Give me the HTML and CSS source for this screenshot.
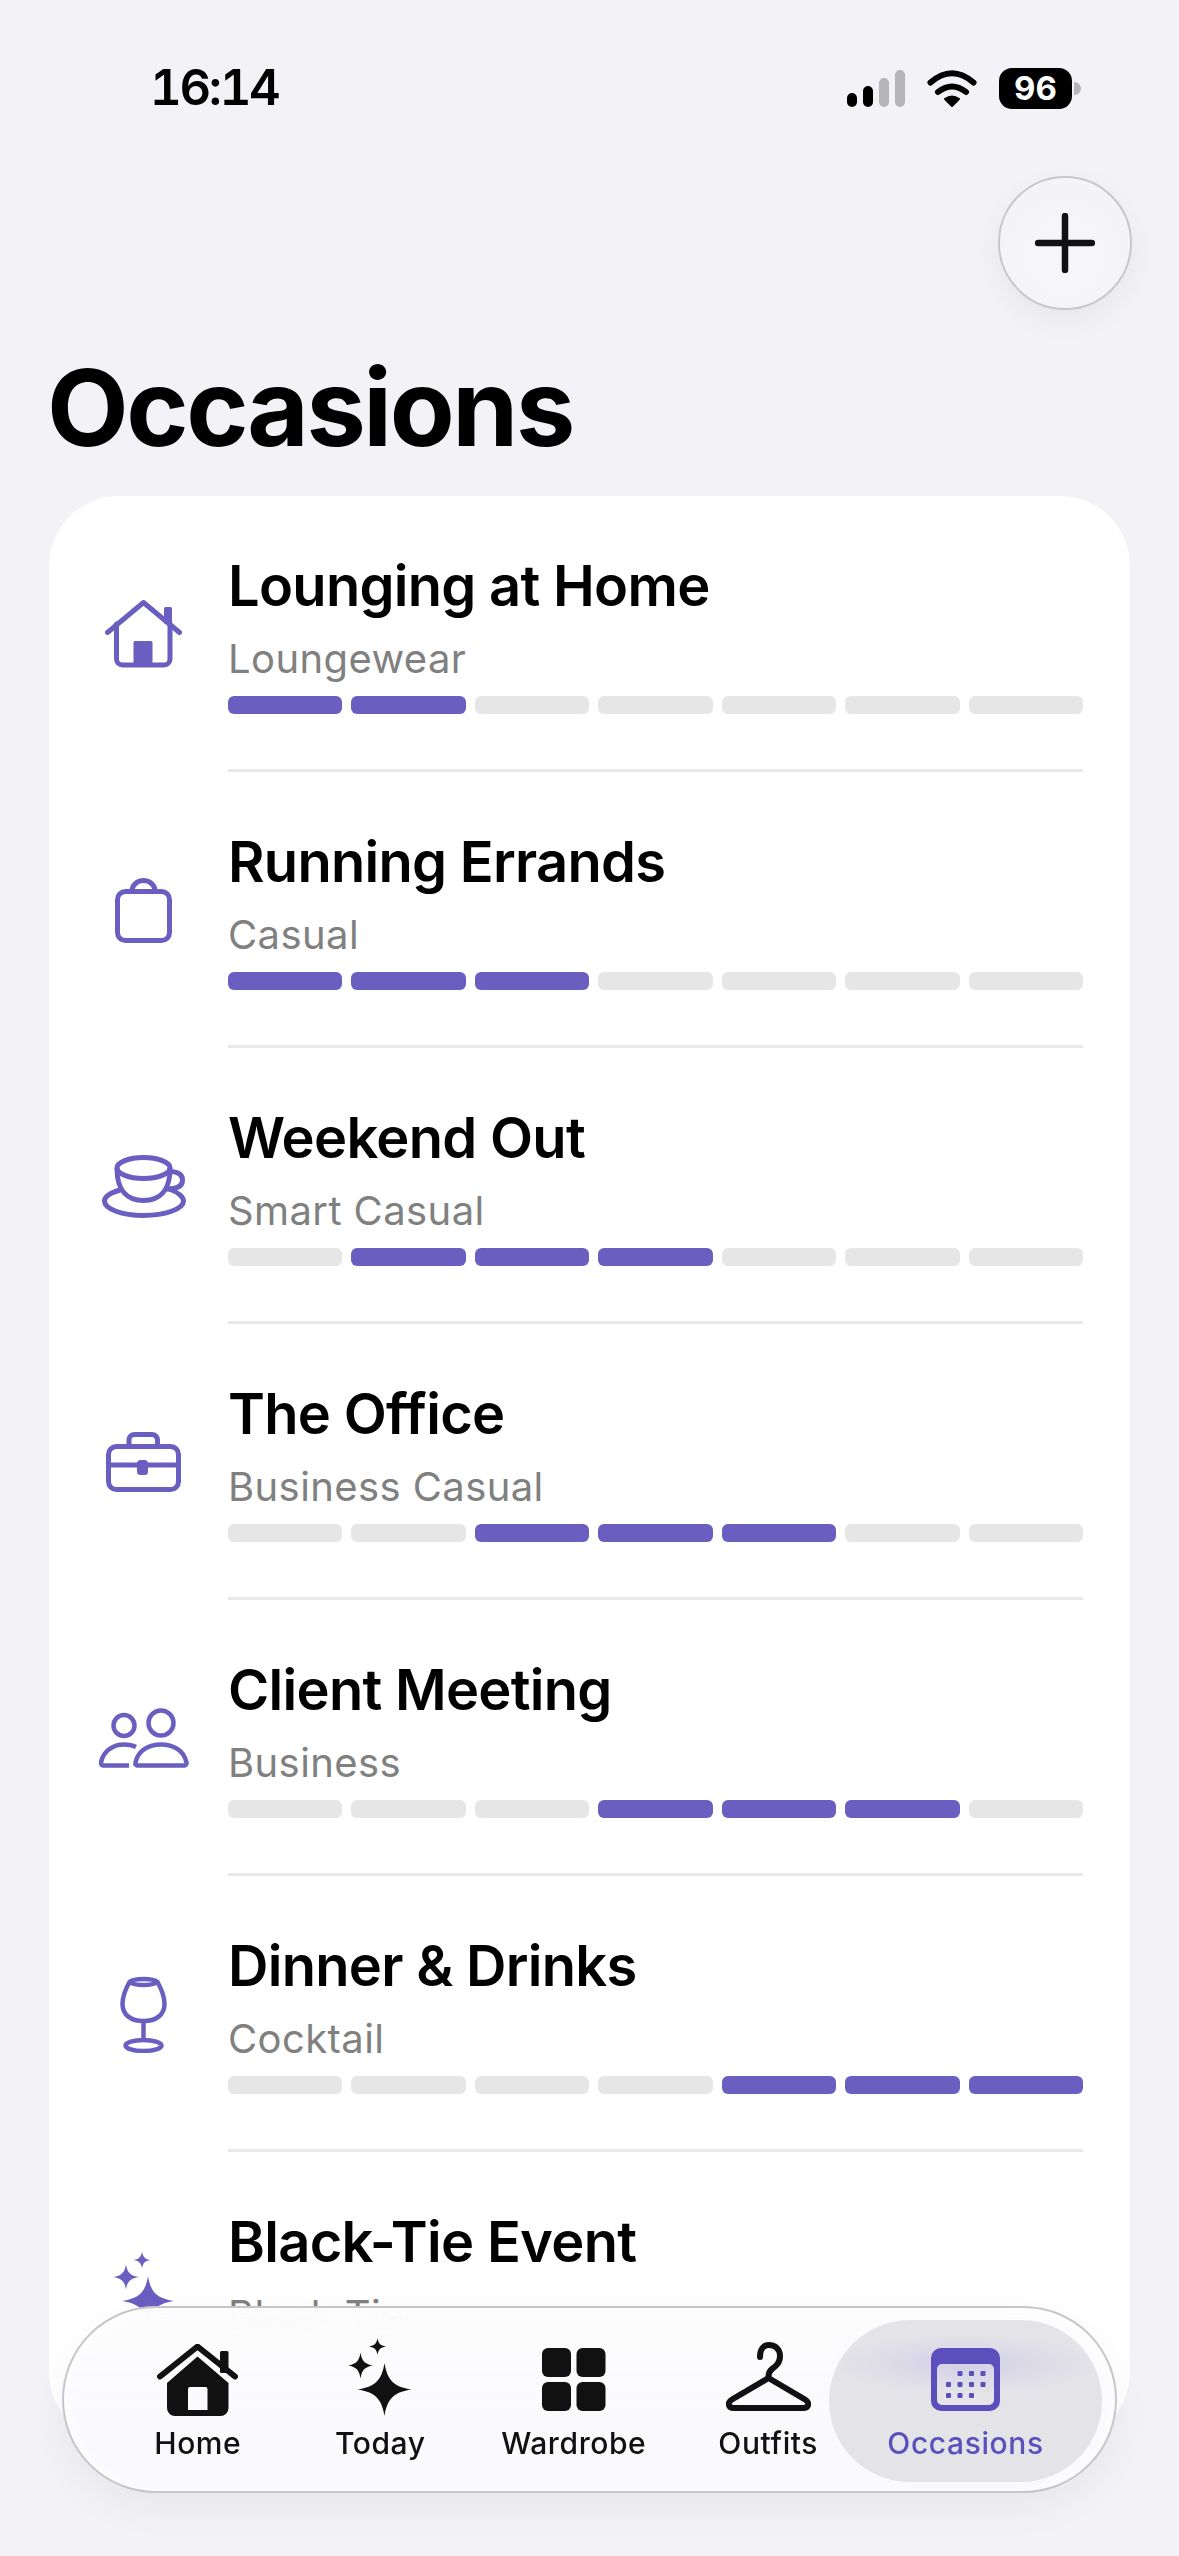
FILE: index.html
```html
<!DOCTYPE html>
<html lang="en">
<head>
<meta charset="utf-8">
<title>Occasions</title>
<link rel="stylesheet" href="styles.css">
</head>
<body>
<div class="screen">
  <header class="status">
    <span class="time">16:14</span>
    <div class="status-icons">
      <div class="signal"><i class="b1"></i><i class="b2"></i><i class="b3 off"></i><i class="b4 off"></i></div>
      <svg class="wifi" width="50" height="37" viewBox="0 0 50 37"><path d="M3.5 12.5Q25-6 46.500 12.500M11 22Q25 11 39 22" fill="none" stroke="#000" stroke-width="6" stroke-linecap="round"/><path d="M18 29Q25 24 32 29L25 36Z" fill="#000" stroke="#000" stroke-width="2" stroke-linejoin="round"/></svg>
      <div class="battery"><span class="level">96</span><i class="tip"></i></div>
    </div>
  </header>

  <div class="actions">
    <button class="add" aria-label="Add">
      <svg width="60" height="60" viewBox="0 0 60 60"><path d="M30 3V57M3 30H57" fill="none" stroke="#111114" stroke-width="6.500" stroke-linecap="round"/></svg>
    </button>
  </div>

  <h1 class="page-title">Occasions</h1>

  <main class="card">
    <section class="row">
      <div class="row-icon">
        <svg width="77" height="68" viewBox="0 0 77 68"><g fill="none" stroke="#6a5fc1" stroke-width="5" stroke-linecap="round" stroke-linejoin="round"><path d="M2.500 32.500L38.500 2.500L74.500 32.500"/><path d="M11.500 24V59a6 6 0 0 0 6 6H59a6 6 0 0 0 6-6V24"/></g><rect x="59" y="7" width="8" height="17" rx="1.500" fill="#6a5fc1"/><rect x="28.500" y="41" width="19" height="24" rx="1.500" fill="#6a5fc1"/></svg>
      </div>
      <div class="row-body">
        <h2 class="row-title">Lounging at Home</h2>
        <p class="row-sub">Loungewear</p>
        <div class="bars"><i class="on"></i><i class="on"></i><i></i><i></i><i></i><i></i><i></i></div>
      </div>
    </section>
    <section class="row">
      <div class="row-icon">
        <svg width="57" height="65" viewBox="0 0 57 65"><g fill="none" stroke="#6a5fc1" stroke-width="5"><rect x="2.500" y="13.500" width="52" height="49" rx="8"/><path d="M17 13a11.500 10.500 0 0 1 23 0"/></g></svg>
      </div>
      <div class="row-body">
        <h2 class="row-title">Running Errands</h2>
        <p class="row-sub">Casual</p>
        <div class="bars"><i class="on"></i><i class="on"></i><i class="on"></i><i></i><i></i><i></i><i></i></div>
      </div>
    </section>
    <section class="row">
      <div class="row-icon">
        <svg width="84" height="63" viewBox="0 0 84 63"><g fill="none" stroke="#6a5fc1" stroke-width="5" stroke-linecap="round"><ellipse cx="41.500" cy="13" rx="26.500" ry="10.500"/><path d="M15 14C15 36 26 45.500 41.500 45.500C57 45.500 68 36 68 14"/><path d="M68 17C76 16 81 20 80.500 26C80 32 74 34 65 34"/><path d="M18 35C8 38 2.500 42 2.500 46C2.500 54 20 60.500 41.500 60.500C63 60.500 81.500 54 81.500 46C81.500 42 76 37 67 34"/></g></svg>
      </div>
      <div class="row-body">
        <h2 class="row-title">Weekend Out</h2>
        <p class="row-sub">Smart Casual</p>
        <div class="bars"><i></i><i class="on"></i><i class="on"></i><i class="on"></i><i></i><i></i><i></i></div>
      </div>
    </section>
    <section class="row">
      <div class="row-icon">
        <svg width="75" height="60" viewBox="0 0 75 60"><g fill="none" stroke="#6a5fc1" stroke-width="5"><rect x="2.500" y="14.500" width="70" height="43" rx="8"/><path d="M2.500 33H72.500"/><path d="M23 14V8a5.500 5.500 0 0 1 5.500-5.500H46a5.500 5.500 0 0 1 5.500 5.500V14"/></g><rect x="31" y="28" width="11" height="15" rx="3.500" fill="#6a5fc1"/></svg>
      </div>
      <div class="row-body">
        <h2 class="row-title">The Office</h2>
        <p class="row-sub">Business Casual</p>
        <div class="bars"><i></i><i></i><i class="on"></i><i class="on"></i><i class="on"></i><i></i><i></i></div>
      </div>
    </section>
    <section class="row">
      <div class="row-icon">
        <svg width="90" height="60" viewBox="0 0 90 60"><g fill="none" stroke="#6a5fc1" stroke-width="4.500" stroke-linejoin="round"><circle cx="25" cy="17.500" r="10.500"/><circle cx="62" cy="15" r="12.500"/><path d="M38 57.500H85.500a2.500 2.500 0 0 0 2-3C85 42 74 36.500 62 36.500C50 36.500 39 42 36.500 54.500a2.500 2.500 0 0 0 1.500 3Z"/><path d="M37 39C33 37 29 36.500 25 36.500C14 36.500 4 43 2 54.500a2.500 2.500 0 0 0 2 3H30"/></g></svg>
      </div>
      <div class="row-body">
        <h2 class="row-title">Client Meeting</h2>
        <p class="row-sub">Business</p>
        <div class="bars"><i></i><i></i><i></i><i class="on"></i><i class="on"></i><i class="on"></i><i></i></div>
      </div>
    </section>
    <section class="row">
      <div class="row-icon">
        <svg width="47" height="77" viewBox="0 0 47 77"><g fill="none" stroke="#6a5fc1" stroke-width="4.500" stroke-linejoin="round"><path d="M9.500 6C5 14 2.500 21 2.500 28C2.500 39 11 45 23.500 45C36 45 44.500 39 44.500 28C44.500 21 42 14 37.500 6C33 2 14 2 9.500 6Z"/><path d="M9.500 6C15 10 32 10 37.500 6"/><path d="M23.500 45V66"/><ellipse cx="23.500" cy="69.500" rx="18" ry="5.500"/></g></svg>
      </div>
      <div class="row-body">
        <h2 class="row-title">Dinner &amp; Drinks</h2>
        <p class="row-sub">Cocktail</p>
        <div class="bars"><i></i><i></i><i></i><i></i><i class="on"></i><i class="on"></i><i class="on"></i></div>
      </div>
    </section>
    <section class="row row-last">
      <div class="row-icon">
        <svg width="62" height="74" viewBox="0 0 62 74"><g fill="#6a5fc1"><path transform="translate(29 8) scale(8.500)" d="M0-1C.1-.35.35-.1 1 0 .35.1.1.35 0 1-.1.35-.35.1-1 0-.35-.1-.1-.35 0-1Z"/><path transform="translate(13 25) scale(13 12.500)" d="M0-1C.1-.35.35-.1 1 0 .35.1.1.35 0 1-.1.35-.35.1-1 0-.35-.1-.1-.35 0-1Z"/><path transform="translate(35 49) scale(26 25)" d="M0-1C.1-.35.35-.1 1 0 .35.1.1.35 0 1-.1.35-.35.1-1 0-.35-.1-.1-.35 0-1Z"/></g></svg>
      </div>
      <div class="row-body">
        <h2 class="row-title">Black-Tie Event</h2>
        <p class="row-sub">Black Tie</p>
        <div class="bars"><i></i><i></i><i></i><i></i><i></i><i class="on"></i><i class="on"></i></div>
      </div>
    </section>
  </main>

  <nav class="tabbar">
    <a class="tab tab-home">
      <span class="tab-icon">
        <svg width="81" height="72" viewBox="0 0 81 72"><g fill="#111"><rect x="63" y="7" width="8.500" height="22" rx="1.500"/><path fill-rule="evenodd" d="M40.500 12.500L71.500 39V64a8 8 0 0 1-8 8H18a8 8 0 0 1-8-8V39ZM33 43a2 2 0 0 0-2 2V66H50.500V45a2 2 0 0 0-2-2Z"/></g><path d="M3 32.500L40.500 2.500L78 32.500" fill="none" stroke="#111" stroke-width="6" stroke-linecap="round" stroke-linejoin="round"/></svg>
      </span>
      <span class="tab-label">Home</span>
    </a>
    <a class="tab tab-today">
      <span class="tab-icon">
        <svg width="64" height="78" viewBox="0 0 64 78"><g fill="#111"><path transform="translate(29.500 8.500) scale(8.500)" d="M0-1C.1-.35.35-.1 1 0 .35.1.1.35 0 1-.1.35-.35.1-1 0-.35-.1-.1-.35 0-1Z"/><path transform="translate(12.500 27.500) scale(12.500 13)" d="M0-1C.1-.35.35-.1 1 0 .35.1.1.35 0 1-.1.35-.35.1-1 0-.35-.1-.1-.35 0-1Z"/><path transform="translate(36.500 51.500) scale(27 26.500)" d="M0-1C.1-.35.35-.1 1 0 .35.1.1.35 0 1-.1.35-.35.1-1 0-.35-.1-.1-.35 0-1Z"/></g></svg>
      </span>
      <span class="tab-label">Today</span>
    </a>
    <a class="tab tab-wardrobe">
      <span class="tab-icon raised">
        <svg width="64" height="63" viewBox="0 0 64 63"><g fill="#111"><rect width="29" height="29" rx="6"/><rect x="34.500" width="29" height="29" rx="6"/><rect y="34" width="29" height="29" rx="6"/><rect x="34.500" y="34" width="29" height="29" rx="6"/></g></svg>
      </span>
      <span class="tab-label">Wardrobe</span>
    </a>
    <a class="tab tab-outfits">
      <span class="tab-icon raised">
        <svg width="85" height="69" viewBox="0 0 85 69"><g fill="none" stroke="#111" stroke-width="6" stroke-linecap="round" stroke-linejoin="round"><path d="M34 15C34 7 38 3 43 3C49 3 54 7 54 14C54 21 50 24 46 27C44 28.500 42.500 31 42.500 35"/><path d="M42.500 36L6 57.500C1 60.500 2 66 8 66H77C83 66 84 60.500 79 57.500Z"/></g></svg>
      </span>
      <span class="tab-label">Outfits</span>
    </a>
    <a class="tab tab-occasions">
      <span class="tab-icon raised">
        <svg width="69" height="63" viewBox="0 0 69 63"><g fill="#5b50bb"><path fill-rule="evenodd" d="M10 0H59a10 10 0 0 1 10 10V53a10 10 0 0 1-10 10H10A10 10 0 0 1 0 53V10A10 10 0 0 1 10 0ZM11 16a5 5 0 0 0-5 5V52a5 5 0 0 0 5 5H58a5 5 0 0 0 5-5V21a5 5 0 0 0-5-5Z"/><rect x="26.500" y="23" width="5" height="5" rx="1"/><rect x="38" y="23" width="5" height="5" rx="1"/><rect x="49.500" y="23" width="5" height="5" rx="1"/><rect x="15" y="34" width="5" height="5" rx="1"/><rect x="26.500" y="34" width="5" height="5" rx="1"/><rect x="38" y="34" width="5" height="5" rx="1"/><rect x="49.500" y="34" width="5" height="5" rx="1"/><rect x="15" y="45" width="5" height="5" rx="1"/><rect x="26.500" y="45" width="5" height="5" rx="1"/><rect x="38" y="45" width="5" height="5" rx="1"/></g></svg>
      </span>
      <span class="tab-label">Occasions</span>
    </a>
  </nav>
</div>
</body>
</html>
```

FILE: styles.css
```css
* { box-sizing: border-box; }
html, body { margin: 0; padding: 0; }
body { background: #f2f2f7; font-family: Inter, "Liberation Sans", sans-serif; color: #000; }
.screen { position: relative; width: 1179px; height: 2556px; overflow: hidden; background: #f2f2f7; }

.status { display: flex; align-items: center; justify-content: space-between; height: 176px; padding: 0 107px 0 150px; }
.time { font-size: 49px; font-weight: 600; font-feature-settings: "tnum"; letter-spacing: -2.3px; line-height: 60px; }
.status-icons { display: flex; align-items: center; gap: 22px; }
.signal { display: flex; align-items: flex-end; gap: 6px; height: 37px; }
.signal i { display: block; width: 10px; border-radius: 5px; background: #000; }
.signal .b1 { height: 14px; }
.signal .b2 { height: 21px; }
.signal .b3 { height: 29px; }
.signal .b4 { height: 37px; }
.signal .off { background: #b4b4b9; }
.battery { position: relative; display: flex; align-items: center; justify-content: center; width: 73px; height: 41px; border-radius: 13px; background: #000; }
.level { color: #fff; font-size: 33px; font-weight: 700; line-height: 41px; }
.tip { position: absolute; right: -9px; top: 14px; width: 7px; height: 13px; border-radius: 0 7px 7px 0; background: #b4b4b9; }

.actions { display: flex; justify-content: flex-end; padding-right: 47px; }
.add { display: flex; align-items: center; justify-content: center; width: 134px; height: 134px; padding: 0; border: 2px solid #c8c8cc; border-radius: 50%; background: radial-gradient(circle at 50% 60%, #f7f7fb 0%, #f4f4f8 70%, #f9f9fb 100%); box-shadow: 0 10px 30px rgba(0, 0, 0, 0.05); }

.page-title { margin: 33px 0 23px; padding-left: 47px; font-size: 106px; font-weight: 700; line-height: 130px; letter-spacing: -2.4px; }

.card { margin: 0 49px; height: 1946px; background: #fff; border-radius: 70px; }
.row { display: flex; align-items: center; }
.row-icon { display: flex; flex: none; align-items: center; justify-content: center; width: 179px; padding-left: 10px; }
.row-body { flex: 1; margin-right: 47px; padding-top: 56px; border-bottom: 3px solid #e8e8e8; }
.row-last .row-body { border-bottom: none; }
.row-title { margin: 0; font-size: 56px; font-weight: 600; line-height: 68px; letter-spacing: -0.7px; }
.row-sub { margin: 14px 0 0; font-size: 40px; font-weight: 400; line-height: 50px; letter-spacing: 0.4px; color: #808080; }
.bars { display: grid; grid-template-columns: repeat(7, 1fr); gap: 9px; margin: 12px 0 55px; }
.bars i { display: block; height: 18px; border-radius: 6px; background: #e6e6e6; }
.bars .on { background: #6a5fc1; }

.tabbar { position: absolute; left: 62px; top: 2306px; display: flex; width: 1055px; height: 187px; padding: 12px 13px 12px 69px; border: 2px solid #c6c6ca; border-radius: 94px; background: linear-gradient(180deg, rgba(252, 252, 253, 0.95) 0%, rgba(249, 249, 252, 0.99) 100%); box-shadow: 0 14px 40px rgba(0, 0, 0, 0.05), inset 0 0 16px rgba(255, 255, 255, 0.9); backdrop-filter: blur(16px); }
.tab { display: flex; flex-direction: column; align-items: center; height: 162px; padding-top: 18px; color: #111; }
.tab-home { width: 130px; }
.tab-today { width: 130px; margin-left: 53px; }
.tab-wardrobe { width: 150px; margin-left: 54px; }
.tab-outfits { width: 120px; margin-left: 60px; }
.tab-occasions { width: 274px; margin-left: 1px; border-radius: 81px; background: radial-gradient(ellipse 48% 18% at 50% 27%, rgba(110, 95, 225, 0.14), rgba(110, 95, 225, 0) 100%), #e4e3e8; color: #5b50bb; }
.tab-icon { display: flex; align-items: flex-end; height: 78px; }
.tab-icon.raised { padding-bottom: 5px; }
.tab-label { margin-top: 9px; font-size: 30px; font-weight: 500; line-height: 36px; letter-spacing: 0.6px; }
```
